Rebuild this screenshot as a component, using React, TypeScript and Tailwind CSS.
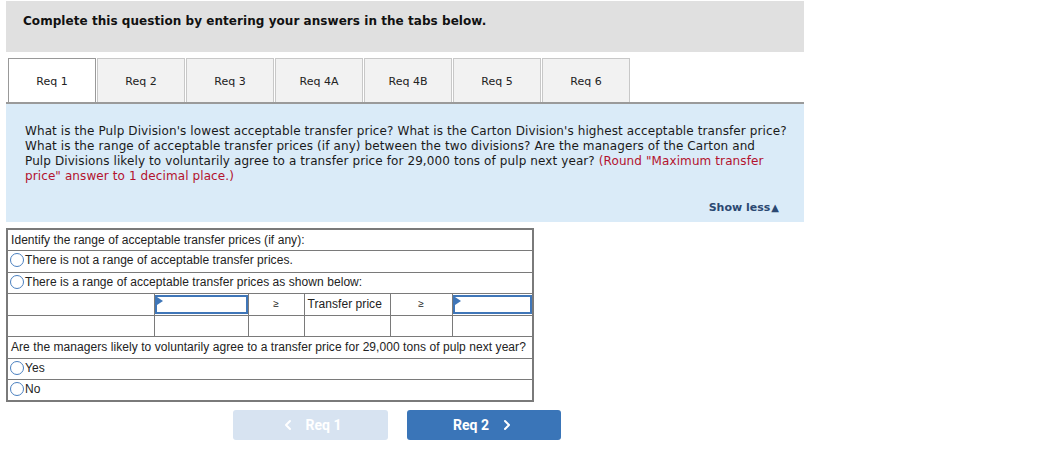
import { ChevronLeft, ChevronRight } from "lucide-react";

const tabs = ["Req 1", "Req 2", "Req 3", "Req 4A", "Req 4B", "Req 5", "Req 6"];

function Radio() {
  return (
    <span className="inline-block w-[14px] h-[14px] rounded-full border border-[#4a7fbf] bg-white align-middle mr-[1px] relative -top-[1px]" />
  );
}

function AnswerBox() {
  return (
    <div className="relative h-[19px] border-2 border-[#3f76b8] bg-white">
      <div className="absolute left-0 top-0 w-0 h-0 border-t-[4px] border-b-[4px] border-l-[6px] border-t-transparent border-b-transparent border-l-[#3f76b8]" />
    </div>
  );
}

export default function App() {
  const cell = "border border-[#7a7a7a] px-[3px] h-[21.5px] leading-none whitespace-nowrap";
  return (
    <div className="bg-white w-[1037px] h-[475px] pt-[1px] pl-[6px] font-['DejaVu_Sans',Verdana,sans-serif] text-[#222]">
      <div className="w-[798px] h-[51px] bg-[#e0e0e0] pl-[17px] pt-[12px]">
        <h1 className="text-[12px] leading-[16px] font-bold text-[#111] tracking-[0.05px]">
          Complete this question by entering your answers in the tabs below.
        </h1>
      </div>

      <div className="w-[798px] mt-[6px] flex gap-[1px] pl-[2px] border-b-2 border-[#9a9a9a]">
        {tabs.map((t, i) => (
          <div
            key={t}
            className={
              i === 0
                ? "w-[88px] h-[44px] pt-[3px] flex items-center justify-center bg-white border border-b-0 border-[#999] text-[11px] text-[#222]"
                : "w-[88px] h-[44px] pt-[3px] flex items-center justify-center bg-[#f2f2f2] border border-b-0 border-[#c8c8c8] text-[11px] text-[#222]"
            }
          >
            {t}
          </div>
        ))}
      </div>

      <div className="w-[798px] h-[118px] bg-[#daebf8] pl-[19px] pr-[4px] pt-[20px] relative">
        <p className="text-[12px] leading-[15px] text-[#1a1a1a] tracking-[0.1px] whitespace-nowrap">
          What is the Pulp Division's lowest acceptable transfer price? What is the Carton Division's highest acceptable transfer price?
          <br />
          What is the range of acceptable transfer prices (if any) between the two divisions? Are the managers of the Carton and
          <br />
          Pulp Divisions likely to voluntarily agree to a transfer price for 29,000 tons of pulp next year?{" "}
          <span className="text-[#b3122e]">
            (Round "Maximum transfer
            <br />
            price" answer to 1 decimal place.)
          </span>
        </p>
        <div className="absolute right-[25px] bottom-[6px] text-[11px] font-bold text-[#2b4872] flex items-center">
          Show less<span className="text-[10px] ml-[1px]">▲</span>
        </div>
      </div>

      <table className="mt-[6px] w-[526px] border-collapse border-2 border-[#7a7a7a] font-['Liberation_Sans',Arial,sans-serif] text-[12px] tracking-[0.06px] text-[#222] table-fixed">
        <colgroup>
          <col className="w-[147px]" />
          <col className="w-[94px]" />
          <col className="w-[56px]" />
          <col className="w-[86px]" />
          <col className="w-[62px]" />
          <col className="w-[81px]" />
        </colgroup>
        <tbody>
          <tr>
            <td colSpan={6} className={cell}>Identify the range of acceptable transfer prices (if any):</td>
          </tr>
          <tr>
            <td colSpan={6} className={cell + " pl-[2px]"}><Radio />There is not a range of acceptable transfer prices.</td>
          </tr>
          <tr>
            <td colSpan={6} className={cell + " pl-[2px]"}><Radio />There is a range of acceptable transfer prices as shown below:</td>
          </tr>
          <tr>
            <td className={cell}></td>
            <td className="border border-[#7a7a7a] p-0 h-[21.5px]"><AnswerBox /></td>
            <td className={cell + " text-center text-[10px]"}>≥</td>
            <td className={cell}>Transfer price</td>
            <td className={cell + " text-center text-[10px]"}>≥</td>
            <td className="border border-[#7a7a7a] p-0 h-[21.5px]"><AnswerBox /></td>
          </tr>
          <tr>
            <td className={cell}></td>
            <td className={cell}></td>
            <td className={cell}></td>
            <td className={cell}></td>
            <td className={cell}></td>
            <td className={cell}></td>
          </tr>
          <tr>
            <td colSpan={6} className={cell}>Are the managers likely to voluntarily agree to a transfer price for 29,000 tons of pulp next year?</td>
          </tr>
          <tr>
            <td colSpan={6} className={cell + " pl-[2px]"}><Radio />Yes</td>
          </tr>
          <tr>
            <td colSpan={6} className={cell + " pl-[2px]"}><Radio />No</td>
          </tr>
        </tbody>
      </table>

      <div className="flex gap-[19px] mt-[8px] ml-[227px] font-['Roboto',Arial,sans-serif]">
        <button className="w-[155px] h-[30px] rounded-[3px] bg-[#d7e3f1] text-white text-[14px] font-bold flex items-center justify-center gap-[10px]">
          <ChevronLeft size={16} strokeWidth={3} />
          Req 1
        </button>
        <button className="w-[154px] h-[30px] rounded-[3px] bg-[#3a75b8] text-white text-[14px] font-bold flex items-center justify-center gap-[10px]">
          Req 2
          <ChevronRight size={16} strokeWidth={3} />
        </button>
      </div>
    </div>
  );
}
